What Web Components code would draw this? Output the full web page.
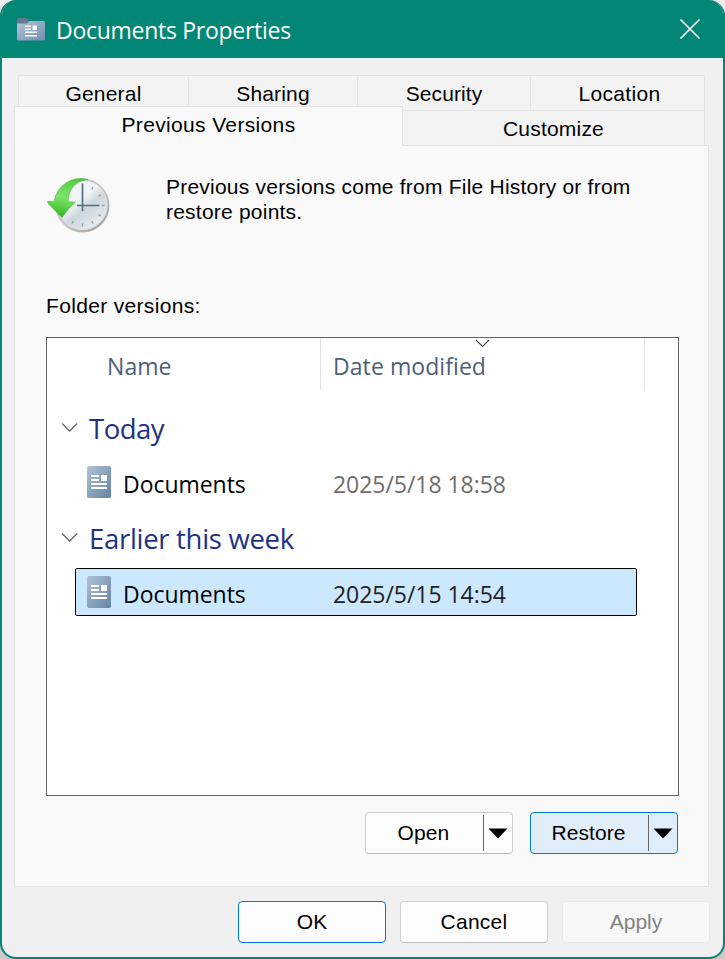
<!DOCTYPE html>
<html lang="en">
<head>
<meta charset="utf-8">
<title>Documents Properties</title>
<style>
html,body{margin:0;height:100%}
body{background:linear-gradient(#ececec 50%,#c9c9c9 50%);font:21px/25px "Liberation Sans",Arial,sans-serif;color:#000;overflow:hidden}
</style>
</head>
<body>
<properties-window>
  <title-bar slot="title" caption="Documents Properties"></title-bar>
  <tab-strip slot="tabs">
    <tab-item slot="back" style="letter-spacing:.2px">General</tab-item>
    <tab-item slot="back" style="letter-spacing:.15px">Sharing</tab-item>
    <tab-item slot="back" style="letter-spacing:.1px">Security</tab-item>
    <tab-item slot="back" style="letter-spacing:.35px;padding-left:4px">Location</tab-item>
    <tab-item slot="front" active style="letter-spacing:.35px">Previous Versions</tab-item>
    <tab-item slot="front" style="letter-spacing:.2px">Customize</tab-item>
  </tab-strip>
  <info-note>Previous versions come from File History or from<br>restore points.</info-note>
  <version-list heading="Folder versions:">
    <version-group style="--spacing:-.5px" label="Today">
      <version-row name="Documents" date="2025/5/18 18:58"></version-row>
    </version-group>
    <version-group style="--spacing:-.3px" label="Earlier this week">
      <version-row selected name="Documents" date="2025/5/15 14:54"></version-row>
    </version-group>
  </version-list>
  <button-row class="page">
    <push-button split style="letter-spacing:.1px">Open</push-button>
    <push-button split hot style="letter-spacing:.1px">Restore</push-button>
  </button-row>
  <button-row slot="footer">
    <push-button primary>OK</push-button>
    <push-button style="letter-spacing:.25px">Cancel</push-button>
    <push-button disabled>Apply</push-button>
  </button-row>
</properties-window>

<script>
const define = (name, render) => customElements.define(name, class extends HTMLElement {
  constructor() {
    super();
    this.attachShadow({ mode: 'open' });
  }
  connectedCallback() {
    const t = document.createElement('template');
    t.innerHTML = render(this);
    this.shadowRoot.replaceChildren(t.content.cloneNode(true));
  }
});

define('properties-window', () => `
<style>
:host{display:flex;flex-direction:column;box-sizing:border-box;width:725px;height:959px;background:#f0f0f0;border:2px solid #028675;border-top:0;border-radius:16px;overflow:hidden}
.tabs{padding:17px 15px 0 12px}
.page{box-sizing:border-box;width:695px;height:742px;margin-left:12px;background:#f9f9f9;border:1px solid #e3e3e3;padding:28px 30px 0 31px;display:flex;flex-direction:column}
.foot{margin:14px 13px 0 0}
</style>
<slot name="title"></slot>
<div class="tabs"><slot name="tabs"></slot></div>
<div class="page"><slot></slot></div>
<div class="foot"><slot name="footer"></slot></div>`);

define('title-bar', el => `
<style>
:host{display:flex;align-items:center;height:58px;flex:none;background:#028675;color:#fff;font:23px/30px "Open Sans","Noto Sans",sans-serif;letter-spacing:-.28px}
.icon{margin:0 9px 0 14px}
span{flex:1;padding-top:2px}
.close{margin-right:22px}
</style>
<svg class="icon" width="31" height="25" viewBox="0 0 31 25">
  <defs><linearGradient id="g" x2="1" y2="1"><stop stop-color="#b3c4d7"/><stop offset="1" stop-color="#6f8fb1"/></linearGradient></defs>
  <path d="M1 4V2.5Q1 1 2.5 1H10q1 0 1.800 1L13 4V7H1z" fill="#647c91"/>
  <path d="M1 6.500H11l2.500-2.500H27.500q1.500 0 1.500 1.500V22q0 1.500-1.500 1.500H2.500Q1 23.500 1 22z" fill="url(#g)"/>
  <path d="M9 8.500h6V10H9zM9 11.500h6V13H9zM16.500 8.500H21V13h-4.500zM9 14.500h12V16H9zM9 18h12v1.500H9z" fill="#fff"/>
</svg>
<span>${el.getAttribute('caption')}</span>
<svg class="close" width="22" height="22" viewBox="0 0 22 22"><path d="M1.500 1.500l19 19M20.500 1.500l-19 19" stroke="#fff" stroke-width="1.700"/></svg>`);

define('tab-strip', () => `
<style>
:host{display:block;height:71px;overflow:hidden;margin-bottom:-1px;position:relative}
.back{display:grid;grid-template-columns:170px 169px 173px 174px;height:35px;margin-left:4px}
.front{display:grid;grid-template-columns:388px 302px;align-items:start;margin-top:-4px}
</style>
<div class="back"><slot name="back"></slot></div>
<div class="front"><slot name="front"></slot></div>`);

define('tab-item', () => `
<style>
:host{display:block;box-sizing:border-box;height:36px;background:#f3f3f3;border:solid #e4e4e4;border-width:1px 0 0 1px;text-align:center;line-height:25px;padding-top:5px;white-space:nowrap}
:host(:nth-child(4)){width:175px;border-right-width:1px}
:host([active]){height:41px;background:#f9f9f9;width:389px;border-right-width:1px}
:host(:nth-child(6)){height:35px;width:303px;margin-top:4px;border-right-width:1px}
</style><slot></slot>`);

define('info-note', () => `
<style>
:host{display:flex;height:119px;letter-spacing:.22px}
svg{flex:none;margin:2px 0 0 1px}
p{margin:0 0 0 55px;white-space:nowrap}
</style>
<svg width="64" height="60" viewBox="0 0 64 60">
  <defs>
    <linearGradient id="f" x1=".1" y1="0" x2=".9" y2="1"><stop stop-color="#eef3f5"/><stop offset=".4" stop-color="#f2f5f7"/><stop offset=".58" stop-color="#ccd5dd"/><stop offset="1" stop-color="#f1f4f6"/></linearGradient>
    <linearGradient id="r" x2="1" y2="1"><stop stop-color="#9fb0b0"/><stop offset=".5" stop-color="#c9c9c9"/><stop offset="1" stop-color="#999"/></linearGradient>
    <linearGradient id="a" x1=".6" y1="0" x2=".4" y2="1"><stop stop-color="#55c944"/><stop offset=".5" stop-color="#7be568"/><stop offset="1" stop-color="#35b624"/></linearGradient>
  </defs>
  <circle cx="35.500" cy="29.500" r="27" fill="url(#r)"/>
  <circle cx="35.500" cy="29" r="24.600" fill="url(#f)" stroke="#dfe3e5"/>
  <path d="M46 11l-1.300 2.300M53.800 18.800l-2.300 1.400M57.500 29.500H55M53.800 40l-2.300-1.400M46 47.500l-1.300-2.300M35.500 50.500v-3M25 47.500l1.300-2.300" stroke="#93a1ac" stroke-width="1.500"/>
  <path d="M35.500 7.500V35M30 29.500h22.500" stroke="#526f80" stroke-width="1.700" fill="none"/>
  <path d="M41 3.500Q29.500.5 19.500 6.500 9.500 13 7 25.500L.500 25.300q0 1.500 1 2.700L15 41.500q6-9 13.500-15.500l-7.500-.2Q21.500 12 31 6.500q4-2 10-3z" fill="url(#a)" stroke="#3fb32f" stroke-width=".5"/>
</svg>
<p><slot></slot></p>`);

define('version-list', el => `
<style>
:host{display:block;letter-spacing:.33px}
.frame{box-sizing:border-box;width:633px;height:459px;margin-top:19px;background:#fff;border:1px solid #646464}
.head{display:grid;grid-template-columns:273px 323px;height:52px;font:23px/32px "Open Sans","Noto Sans",sans-serif;color:#4c607a}
.head div{position:relative;box-sizing:border-box;border-right:1px solid #e3e3e3;padding:12px 0 0 60px;letter-spacing:.07px;width:274px}
.head .date{padding-left:13px;width:325px}
svg{position:absolute;left:155px;top:1px}
.groups{padding-top:11px}
</style>
${el.getAttribute('heading')}
<div class="frame">
  <div class="head"><div>Name</div><div class="date">Date modified<svg width="15" height="9" viewBox="0 0 15 9"><path d="M1 1l6.500 6.500L14 1" fill="none" stroke="#444" stroke-width="1.100"/></svg></div></div>
  <div class="groups"><slot></slot></div>
</div>`);

define('version-group', el => `
<style>
:host{display:block;height:110px}
.label{display:flex;align-items:center;box-sizing:border-box;height:57px;padding-bottom:2px;font:27.500px/36px "Open Sans","Noto Sans",sans-serif;color:#1e3287;letter-spacing:var(--spacing)}
svg{margin:0 11px 2px 14px}
</style>
<div class="label"><svg width="17" height="11" viewBox="0 0 17 11"><path d="M1.200 1.500l7.500 7.500 7.500-7.500" fill="none" stroke="#686868" stroke-width="1.300"/></svg>${el.getAttribute('label')}</div>
<slot></slot>`);

define('version-row', el => `
<style>
:host{display:grid;grid-template-columns:37px 210px 1fr;align-items:center;box-sizing:border-box;width:562px;height:48px;margin-left:28px;padding-left:10px;border:1px solid transparent;border-radius:2px;font:23px/32px "Open Sans","Noto Sans",sans-serif;letter-spacing:-.04px;color:#000}
:host([selected]){background:#cce8ff;border-color:#000}
.date{color:#6d6d6d}
:host([selected]) .date{color:#222}
span{padding-top:4px}
</style>
<svg width="26" height="34" viewBox="0 0 26 34">
  <defs><linearGradient id="d" x2="1" y2="1"><stop stop-color="#b0c2d5"/><stop offset="1" stop-color="#6484a5"/></linearGradient></defs>
  <rect x="1" y="1" width="24" height="32" rx="1.800" fill="url(#d)"/>
  <path d="M5 10h8v2H5zM5 14h8v2H5zM15 10h6v6h-6zM5 18h16v2H5zM5 22h16v2H5z" fill="#fff"/>
</svg>
<span>${el.getAttribute('name')}</span><span class="date">${el.getAttribute('date')}</span>`);

define('button-row', () => `
<style>
:host{display:flex;justify-content:flex-end;gap:14px}
:host(.page){gap:17px;margin-top:16px}
</style><slot></slot>`);

define('push-button', el => `
<style>
:host{display:flex;align-items:center;justify-content:center;box-sizing:border-box;width:148px;height:42px;padding-bottom:1px;background:#fdfdfd;border:1px solid #d0d0d0;border-bottom-color:#bcbcbc;border-radius:4px}
:host([primary]){border-color:#0078d4}
:host([hot]){border-color:#0078d4;background:#e0eef9}
:host([disabled]){background:#f8f8f8;border-color:#eaeaea;color:#838383}
:host([split]){justify-content:flex-start}
:host([split]) .label{width:117px;box-sizing:border-box;padding-right:2px;text-align:center;line-height:40px}
.menu{display:flex;align-items:center;justify-content:center;width:27px;height:36px;margin-top:1px;border-left:1.500px solid #666}
</style>
<span class="label"><slot></slot></span>${el.hasAttribute('split') ? '<span class="menu"><svg width="20" height="11" viewBox="0 0 20 11"><path d="M.500.500h19L10 10.500z"/></svg></span>' : ''}`);
</script>
</body>
</html>
